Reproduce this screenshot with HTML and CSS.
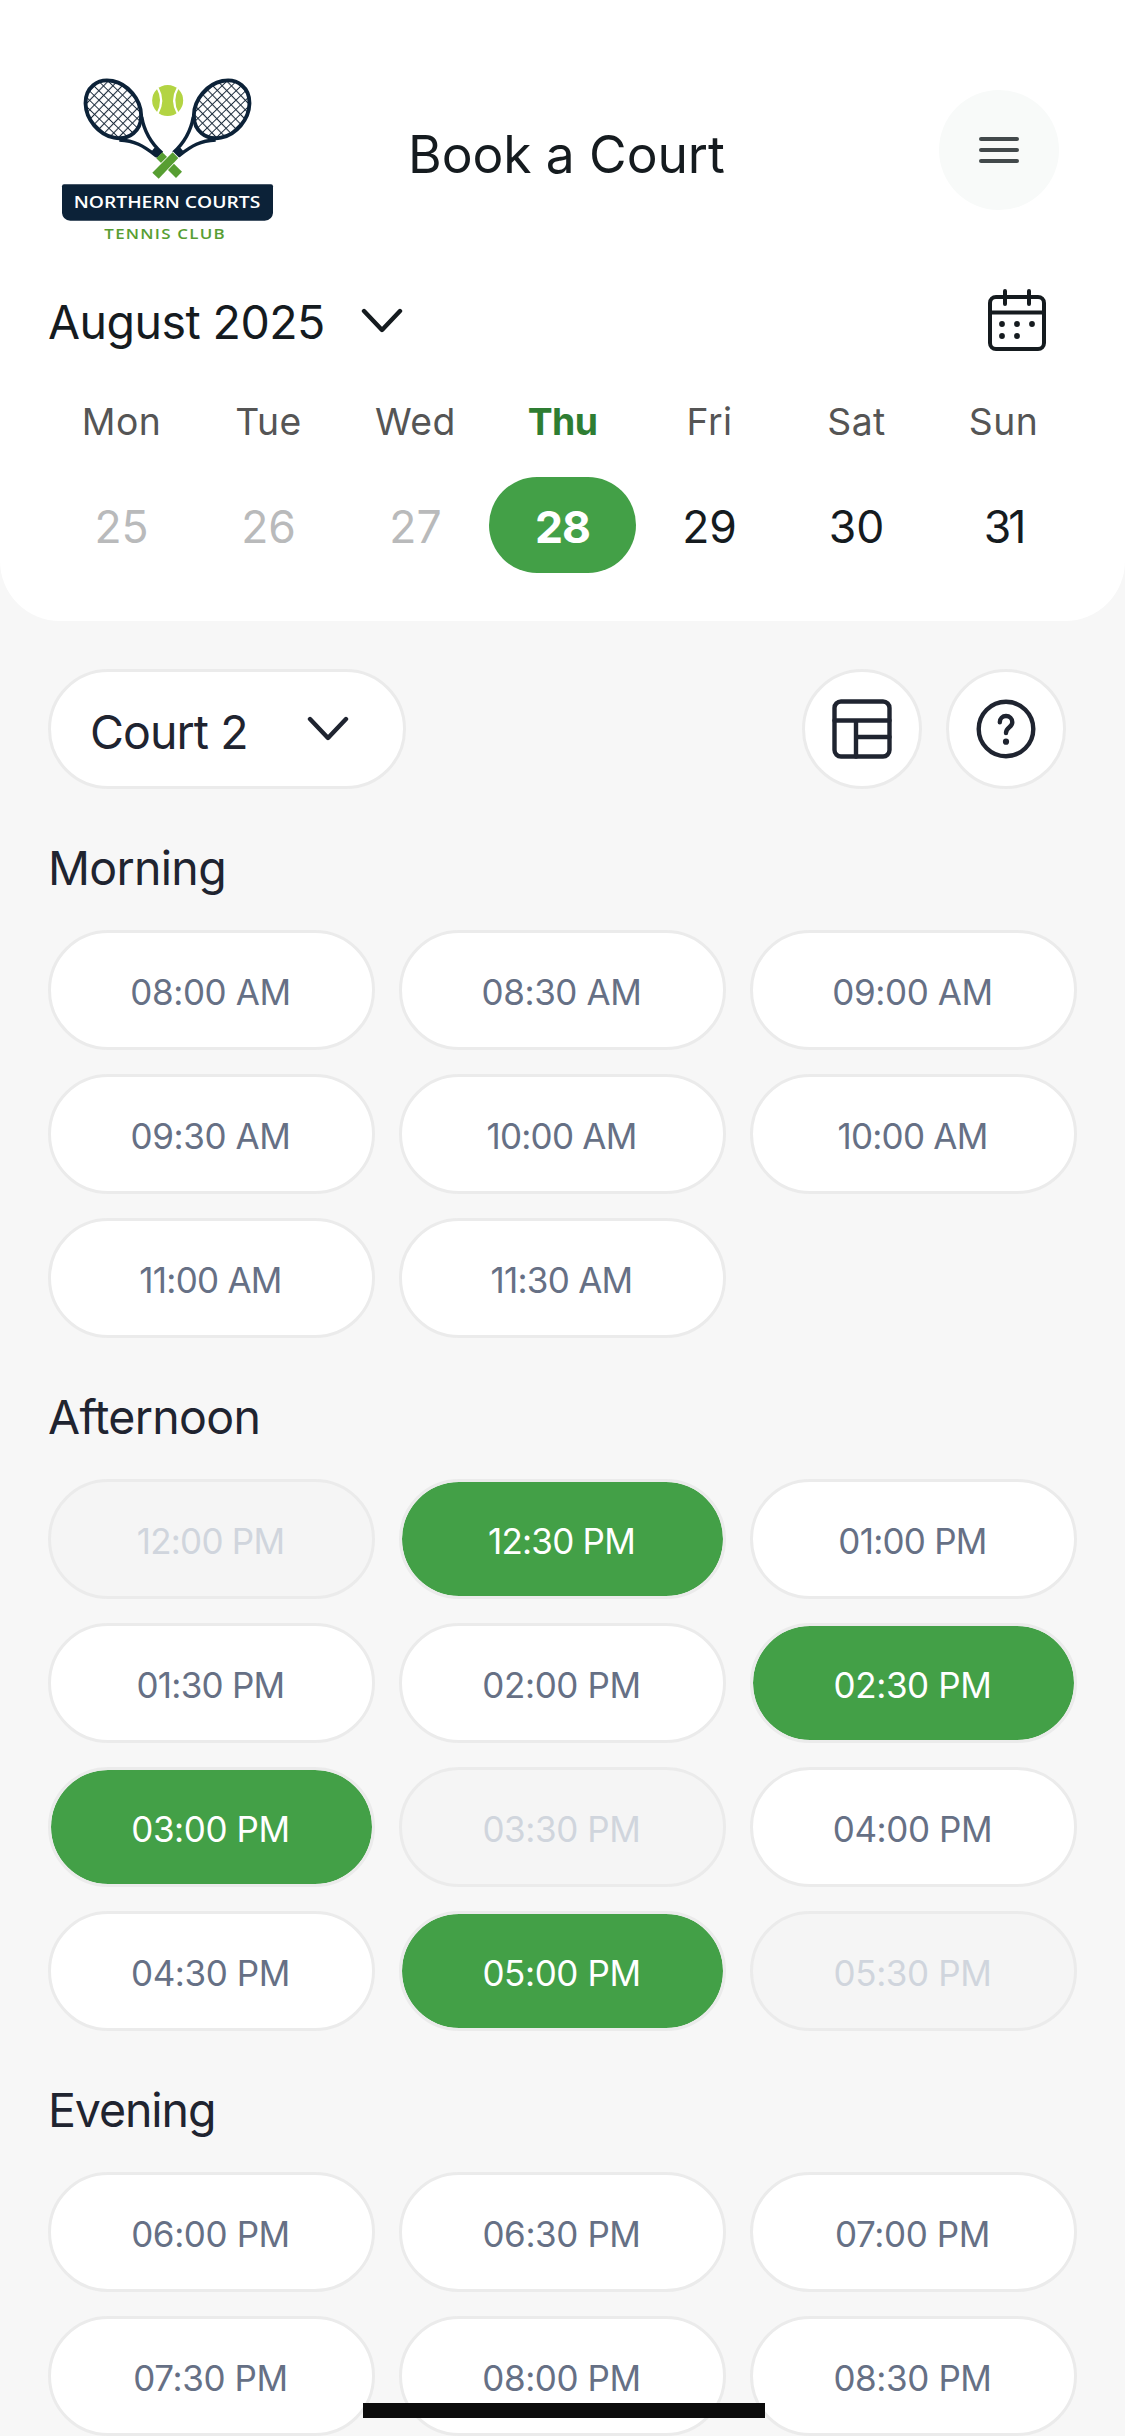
FILE: index.html
```html
<!DOCTYPE html>
<html lang="en">
<head>
<meta charset="utf-8">
<title>Book a Court</title>
<link rel="stylesheet" href="styles.css">
</head>
<body>
<div class="screen">
  <header class="header">
    <div class="topbar">
      <svg class="logo" viewBox="63 54 642 492" role="img" aria-label="Northern Courts Tennis Club">
        <defs>
          <pattern id="strings" width="20" height="20" patternUnits="userSpaceOnUse" patternTransform="translate(220 148) rotate(-6)">
            <path d="M0 10H20M10 0V20" fill="none" stroke="#1c2c3c" stroke-width="3.300"/>
          </pattern>
          <g id="racket">
            <path d="M305 170C312 212 334 250 366 279M238 240C284 242 308 256 350 288" fill="none" stroke="#0c2238" stroke-width="10.500"/>
            <path d="M343 264L352 262L368 277L351 294L332 277Z" fill="#0c2238"/>
            <ellipse cx="220" cy="148" rx="94" ry="75" transform="rotate(50 220 148)" fill="#fff"/>
            <ellipse cx="220" cy="148" rx="94" ry="75" transform="rotate(50 220 148)" fill="url(#strings)" stroke="#0c2238" stroke-width="11.500"/>
          </g>
        </defs>
        <use href="#racket"/>
        <use href="#racket" transform="matrix(-1 0 0 1 765 0)"/>
        <path d="M367 277L426 335L408 354L349 295Z" fill="#579e32"/>
        <path d="M398 277L415 294L356 356L337 338Z" fill="#579e32" stroke="#fff" stroke-width="5" paint-order="stroke"/>
        <circle cx="383" cy="121.500" r="46.500" fill="#b3d443"/>
        <path d="M353 84Q374 121 353 160M413 84Q392 121 413 160" fill="none" stroke="#fff" stroke-width="6.500"/>
        <path d="M66 379Q66 373 72 373H693Q699 373 699 379V459Q697 480 674 482H91Q68 480 66 459Z" fill="#0c2238"/>
        <text class="logo-name" x="101" y="444" textLength="560" lengthAdjust="spacingAndGlyphs">NORTHERN COURTS</text>
        <text class="logo-sub" x="193" y="537" textLength="365" lengthAdjust="spacingAndGlyphs">TENNIS CLUB</text>
      </svg>
      <h1 class="title">Book a Court</h1>
      <button class="menu" aria-label="Menu">
        <svg width="40" height="26" viewBox="0 0 40 26"><path d="M2 2H38M2 13H38M2 24H38"/></svg>
      </button>
    </div>

    <div class="month-row">
      <button class="month">August 2025
        <svg class="chevron" width="42" height="26" viewBox="0 0 42 26"><path d="M3 3L21 22L39 3"/></svg>
      </button>
      <svg class="calendar" width="58" height="62" viewBox="0 0 58 62">
        <rect x="2" y="8" width="54" height="52" rx="6"/>
        <path d="M2 23.500H56M17 2V15M41 2V15"/>
        <g class="dots"><circle cx="14" cy="35" r="2.900"/><circle cx="29" cy="35" r="2.900"/><circle cx="44" cy="35" r="2.900"/><circle cx="14" cy="47" r="2.900"/><circle cx="29" cy="47" r="2.900"/></g>
      </svg>
    </div>

    <div class="week names">
      <span>Mon</span><span>Tue</span><span>Wed</span><span class="today">Thu</span><span>Fri</span><span>Sat</span><span>Sun</span>
    </div>
    <div class="week dates">
      <span class="past">25</span><span class="past">26</span><span class="past">27</span><span class="selected">28</span><span>29</span><span>30</span><span class="narrow">31</span>
    </div>
  </header>

  <main class="content">
    <div class="toolbar">
      <button class="court">Court 2
        <svg class="chevron" width="42" height="26" viewBox="0 0 42 26"><path d="M3 3L21 22L39 3"/></svg>
      </button>
      <div class="actions">
        <button class="round" aria-label="Table view">
          <svg width="60" height="60" viewBox="0 0 60 60"><rect x="2.500" y="2.500" width="55" height="55" rx="6.500"/><path d="M2.500 21.500H57.500M24 21.500V57.500M24 38H57.500"/></svg>
        </button>
        <button class="round" aria-label="Help">
          <svg width="60" height="60" viewBox="0 0 60 60"><circle cx="30" cy="30" r="27.300"/><path d="M23.800 23.200C23.800 19.500 26.500 17 30 17S36.300 19.700 36.300 23.200C36.300 28.500 30 28 30 34"/><circle class="dot" cx="30" cy="42.700" r="3.100"/></svg>
        </button>
      </div>
    </div>

    <section>
      <h2>Morning</h2>
      <div class="slots">
        <button>08:00 AM</button><button>08:30 AM</button><button>09:00 AM</button>
        <button>09:30 AM</button><button class="narrow">10:00 AM</button><button class="narrow">10:00 AM</button>
        <button class="narrow">11:00 AM</button><button class="narrow">11:30 AM</button>
      </div>
    </section>

    <section>
      <h2>Afternoon</h2>
      <div class="slots">
        <button class="off narrow">12:00 PM</button><button class="on narrow">12:30 PM</button><button class="narrow">01:00 PM</button>
        <button class="narrow">01:30 PM</button><button>02:00 PM</button><button class="on">02:30 PM</button>
        <button class="on">03:00 PM</button><button class="off">03:30 PM</button><button>04:00 PM</button>
        <button>04:30 PM</button><button class="on">05:00 PM</button><button class="off">05:30 PM</button>
      </div>
    </section>

    <section>
      <h2 class="tight">Evening</h2>
      <div class="slots">
        <button>06:00 PM</button><button>06:30 PM</button><button>07:00 PM</button>
        <button>07:30 PM</button><button>08:00 PM</button><button>08:30 PM</button>
      </div>
    </section>
  </main>
  <div class="home-indicator"></div>
</div>
</body>
</html>
```
FILE: styles.css
```css
* { box-sizing: border-box; }
body { margin: 0; background: #f7f7f7; font-family: Inter, "Liberation Sans", sans-serif; color: #151b1f; }
button { font: inherit; color: inherit; border: 0; background: none; padding: 0; margin: 0; }
svg { display: block; fill: none; stroke: currentColor; stroke-linecap: round; stroke-linejoin: round; }

.screen { position: relative; width: 1125px; height: 2436px; overflow: hidden; }

.header { height: 621px; padding: 78px 48px 48px; background: #fff; border-radius: 0 0 60px 60px; }
.topbar { display: flex; align-items: flex-start; height: 164px; padding: 0 18px 0 13px; }
.logo { width: 214px; height: 164px; flex: none; stroke: none; stroke-linecap: butt; stroke-linejoin: miter; }
.logo-name { font: 600 51px "Open Sans", sans-serif; fill: #fff; }
.logo-sub { font: 600 41px "Open Sans", sans-serif; fill: #579e32; letter-spacing: 3px; }
.title { margin: 46px 0 0 133px; font-size: 51.5px; font-weight: 400; line-height: 60px; letter-spacing: -0.07px; white-space: nowrap; }
.menu { display: flex; align-items: center; justify-content: center; width: 120px; height: 120px; margin: 12px 0 0 auto; border-radius: 50%; background: #f8faf9; color: #42494b; }
.menu svg { stroke-width: 4; }

.month-row { display: flex; align-items: center; justify-content: space-between; height: 64px; margin-top: 46px; padding-right: 31px; }
.month { display: flex; align-items: center; gap: 36px; padding-top: 3px; font-size: 46.5px; line-height: 60px; letter-spacing: -0.55px; white-space: nowrap; }
.month .chevron { margin-top: -1px; }
.chevron { stroke-width: 4.4; }
.calendar { stroke-width: 4; }
.dots { fill: currentColor; stroke: none; }

.week { display: grid; grid-template-columns: repeat(7, 147px); text-align: center; }
.names { margin-top: 45px; font-size: 37.3px; line-height: 50px; letter-spacing: 0.5px; color: #555; }
.today { font-weight: 700; color: #2e7d32; letter-spacing: -0.6px; }
.dates { margin-top: 30px; font-size: 44.5px; line-height: 94px; }
.dates span { height: 96px; padding-top: 3px; border-radius: 48px; }
.dates .past { color: #b9babb; }
.dates .selected { background: #43a047; color: #fff; font-weight: 700; letter-spacing: -1px; }
.dates .narrow { letter-spacing: -3px; }

.content { padding: 48px 48px 0; color: #1f2430; }
.toolbar { display: flex; justify-content: space-between; padding-right: 11px; }
.court { display: flex; align-items: center; justify-content: space-between; width: 358px; height: 120px; padding: 5px 54px 0 39px; border: 3px solid #ebebeb; border-radius: 60px; background: #fff; font-size: 46.5px; letter-spacing: -0.95px; }
.court .chevron { margin-top: -6px; }
.actions { display: flex; gap: 24px; }
.round { display: flex; align-items: center; justify-content: center; width: 120px; height: 120px; border: 3px solid #ebebeb; border-radius: 50%; background: #fff; }
.round svg { stroke-width: 4.4; }
.round .dot { fill: currentColor; stroke: none; }

h2 { margin: 0; padding: 49px 0 32px; font-size: 46.5px; font-weight: 400; line-height: 60px; letter-spacing: -0.7px; }
h2.tight { letter-spacing: -1.1px; }
.slots { display: grid; grid-template-columns: repeat(3, 327px); gap: 24px; }
.slots button { height: 120px; padding: 4px 2px 0 0; border: 3px solid #ebebeb; border-radius: 60px; background: #fff; color: #667085; font-size: 35px; letter-spacing: -0.4px; }
.slots .narrow { letter-spacing: -0.75px; }
.slots .on { background: #43a047 padding-box; color: #fff; }
.slots .off { background: #f5f5f5; color: #d0d5dd; }

.home-indicator { position: absolute; left: 363px; top: 2403px; width: 402px; height: 15px; background: #0c0c0c; }
```
